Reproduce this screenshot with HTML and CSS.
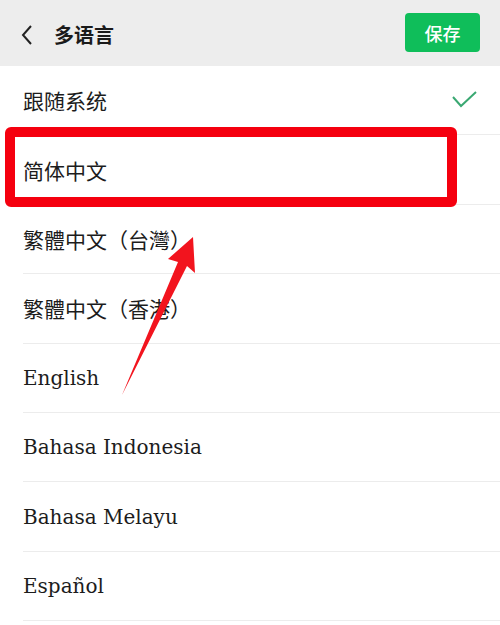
FILE: index.html
```html
<!DOCTYPE html>
<html lang="zh-CN">
<head>
<meta charset="utf-8">
<title>多语言</title>
<link rel="stylesheet" href="styles.css">
</head>
<body>
<div class="page">
  <header class="topbar">
    <div class="left">
      <svg class="back" width="14" height="22" viewBox="0 0 14 22"><polyline points="11,2 3,11 11,20" fill="none" stroke="#222" stroke-width="2"/></svg>
      <span class="title">多语言</span>
    </div>
    <button class="save">保存</button>
  </header>
  <ul class="list">
    <li class="row cjk">跟随系统
      <svg class="check" width="26" height="18" viewBox="0 0 26 18"><polyline points="1,6 9,15 24,1" fill="none" stroke="#3aa872" stroke-width="2"/></svg>
    </li>
    <li class="row cjk">简体中文</li>
    <li class="row cjk">繁體中文（台灣）</li>
    <li class="row cjk">繁體中文（香港）</li>
    <li class="row latin">English</li>
    <li class="row latin">Bahasa Indonesia</li>
    <li class="row latin">Bahasa Melayu</li>
    <li class="row latin">Español</li>
  </ul>
  <div class="highlight"></div>
  <svg class="arrow" width="500" height="625" viewBox="0 0 500 625"><polygon points="193,237 168,259 178,262 122,395 187,266 195,273" fill="#f2141e"/></svg>
</div>
</body>
</html>
```
FILE: styles.css
```css
html, body {
  margin: 0;
  padding: 0;
  background: #ffffff;
}
.page {
  position: relative;
  width: 500px;
  height: 625px;
  overflow: hidden;
  font-family: "Noto Sans CJK SC", "Noto Sans", sans-serif;
}
.topbar {
  height: 66px;
  background: #ededed;
  display: flex;
  align-items: center;
  justify-content: space-between;
  padding: 4px 20px 0 20px;
  box-sizing: border-box;
}
.left {
  display: flex;
  align-items: center;
  gap: 20px;
}
.back {
  display: block;
}
.title {
  font-size: 20px;
  font-weight: 700;
  color: #1a1a1a;
  line-height: 1;
}
.save {
  width: 75px;
  height: 39px;
  border: none;
  border-radius: 4px;
  background: #0fbe5a;
  color: #ffffff;
  font-family: "Noto Sans CJK SC", sans-serif;
  font-size: 18px;
  font-weight: 500;
  padding: 0;
  margin-top: -5px;
}
.list {
  list-style: none;
  margin: 0;
  padding: 0 0 0 23px;
}
.row {
  height: 69.4px;
  box-sizing: border-box;
  border-bottom: 1px solid #ececec;
  display: flex;
  align-items: center;
  justify-content: space-between;
  padding-right: 22px;
  color: #1c1c1c;
}
.cjk {
  font-family: "Noto Sans CJK SC", sans-serif;
  font-size: 21px;
}
.latin {
  font-family: "DejaVu Serif", serif;
  font-size: 20px;
}
.check {
  display: block;
}
.highlight {
  position: absolute;
  left: 5px;
  top: 127px;
  width: 452px;
  height: 80px;
  box-sizing: border-box;
  border: 10px solid #f5000f;
  border-radius: 6px;
}
.arrow {
  position: absolute;
  left: 0;
  top: 0;
}
```
